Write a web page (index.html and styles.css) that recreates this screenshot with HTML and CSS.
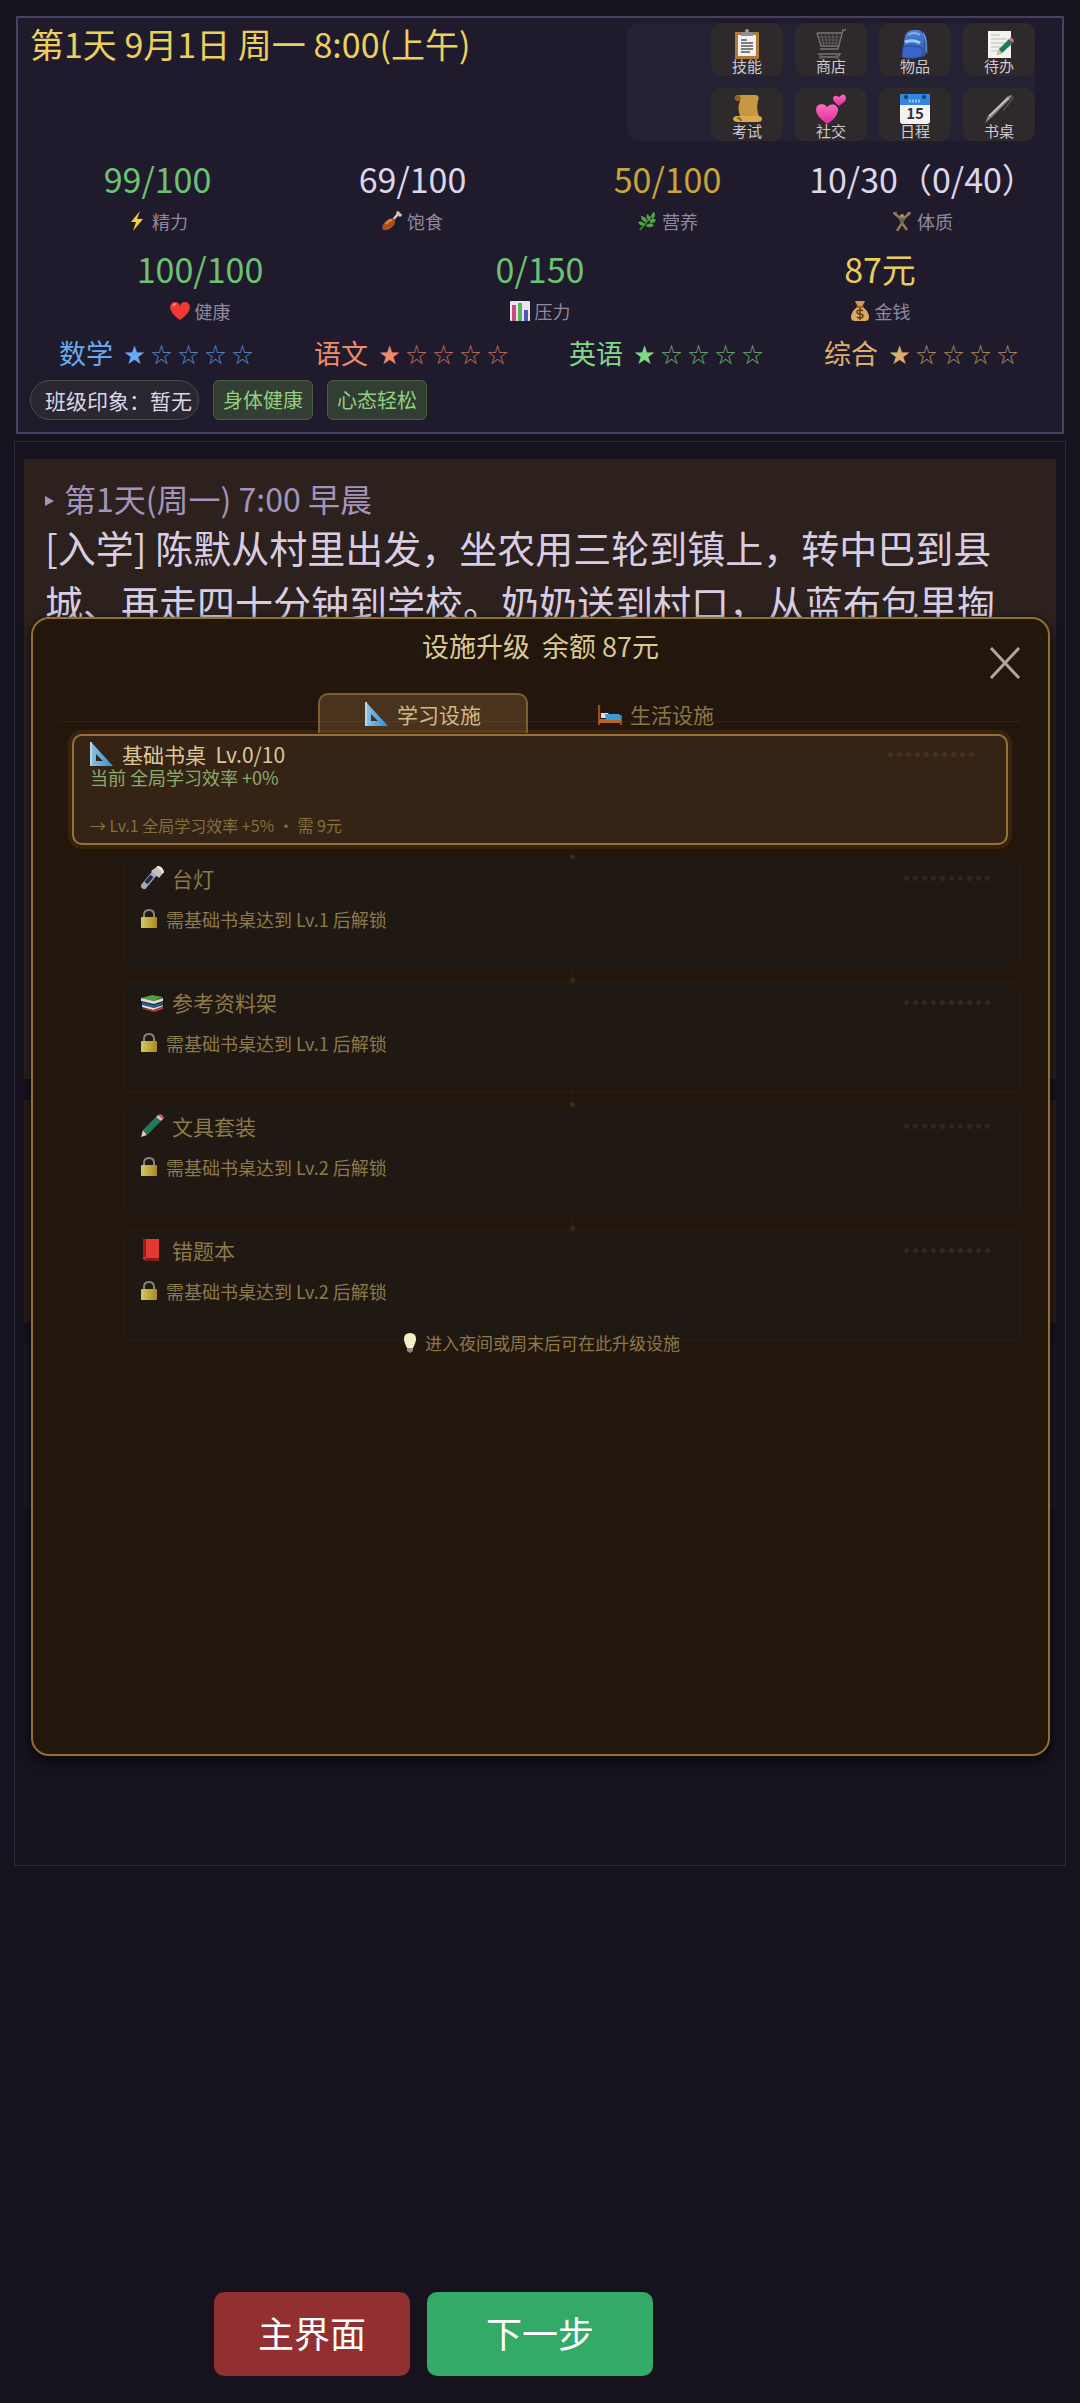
FILE: index.html
```html
<!DOCTYPE html>
<html lang="zh-CN">

<head>
    <meta charset="UTF-8">
    <meta name="viewport" content="width=device-width, initial-scale=1.0">
    <title>设施升级</title>
    <link rel="stylesheet" href="styles.css">
</head>

<body>
    <!-- icon sprites -->
    <svg class="sprites" aria-hidden="true">
        <defs>
            <linearGradient id="gBag" x1="0" y1="0" x2="0" y2="1">
                <stop offset="0" stop-color="#4f7fd0" />
                <stop offset="1" stop-color="#2f55b4" />
            </linearGradient>
            <linearGradient id="gPink" x1="0" y1="0" x2="0" y2="1">
                <stop offset="0" stop-color="#ff6cc0" />
                <stop offset="1" stop-color="#e02a9a" />
            </linearGradient>
            <linearGradient id="gRuler" x1="0" y1="0" x2="1" y2="0">
                <stop offset="0" stop-color="#8fc0e0" />
                <stop offset="1" stop-color="#2a8fd8" />
            </linearGradient>
            <linearGradient id="gLock" x1="0" y1="0" x2="1" y2="0">
                <stop offset="0" stop-color="#d8c95a" />
                <stop offset="1" stop-color="#a88a20" />
            </linearGradient>
        </defs>
        <symbol id="i-clipboard" viewBox="0 0 30 30">
            <rect x="3" y="3" width="24" height="27" rx="1" fill="#b07a3c" />
            <rect x="6" y="6" width="18" height="21" fill="#f4f2ee" />
            <path d="M9 3h12v4H9z" fill="#8d8d92" />
            <circle cx="15" cy="2" r="2" fill="#9a9a9f" />
            <path d="M9 11h6M9 14h12M9 17h12M9 20h12M9 23h9" stroke="#55555c" stroke-width="1.4" />
        </symbol>
        <symbol id="i-cart" viewBox="0 0 30 30">
            <path d="M30 1h-3l-5 19H4M1 4h25M1 4l4 13h18M4 28h18l2-3H2" fill="none" stroke="#77757a" stroke-width="1.3" />
            <path d="M5 4l3 13M9 4l2 13M13 4l1 13M17 4v13M21 4l-1 13M2 8h23M3 11h21M4 14h20" fill="none" stroke="#5d5b60" stroke-width="1" />
            <circle cx="5" cy="28" r="2" fill="#5d5b60" />
            <circle cx="21" cy="28" r="2" fill="#5d5b60" />
        </symbol>
        <symbol id="i-bag" viewBox="0 0 30 30">
            <path d="M18 1q8 1 9 10l1 13-5 4z" fill="#2c4e94" />
            <path d="M23 4q4 5 3 19" fill="none" stroke="#6d98dd" stroke-width="1.3" />
            <path d="M4 12Q5 1 13 1h5q6 1 6 11v15q-10 4-21 1z" fill="url(#gBag)" />
            <path d="M8 6q6-4 12 0" fill="none" stroke="#86aef0" stroke-width="2" />
            <path d="M5 13q9-3 15 1" fill="none" stroke="#8fd0ee" stroke-width="3" />
            <path d="M3 18q9-3 19 1v8q-10 4-20 1z" fill="#3a66cc" stroke="#274a9c" />
        </symbol>
        <symbol id="i-memo" viewBox="0 0 30 30">
            <rect x="4" y="2" width="23" height="27" fill="#f2f2ee" />
            <path d="M7 6h9M7 10h16M7 14h14M7 18h10M7 22h7" stroke="#bdbdc0" />
            <path d="M13 26l2-6 10-10 4 4-11 10z" fill="#1f7a58" />
            <path d="M13 26l2-6 3 4z" fill="#e2b98a" />
            <path d="M25 10l2-2 3 3-1 3z" fill="#d9687a" />
        </symbol>
        <symbol id="i-scroll" viewBox="0 0 30 30">
            <path d="M4 1h20q4 1 2 6-2 8 1 15H8Q5 14 8 7z" fill="#c99644" />
            <path d="M4 1q-3 3 0 6h4q2-3-1-6z" fill="#8f6222" />
            <path d="M4 22h22q4 0 4 3t-4 3H5q-4-1-4-3t3-3z" fill="#dca850" />
            <path d="M5 24q4 0 4 3" fill="none" stroke="#8f6222" stroke-width="2" />
        </symbol>
        <symbol id="i-hearts" viewBox="0 0 30 30">
            <path d="M11 30Q0 22 0 16q0-6 6-6 3 0 5 3 4-4 8-2 5 3 2 9-3 6-10 10z" fill="url(#gPink)" />
            <path d="M23 12q-6-4-6-8 1-4 6-1 5-5 7 0 1 4-7 9z" fill="url(#gPink)" />
        </symbol>
        <symbol id="i-pen" viewBox="0 0 30 30">
            <path d="M1 29l3-7L24 2l4-1-2 4L7 24z" fill="#8c8a8c" />
            <path d="M5 22L24 4" stroke="#d5d3d5" stroke-width="1.2" />
            <path d="M28 2q2 2-2 6l-7 9" fill="none" stroke="#6c6a6c" />
        </symbol>
        <symbol id="i-bolt" viewBox="0 0 20 20">
            <path d="M13 0L4 11h5L6 20l10-12h-6z" fill="#f8cf30" />
        </symbol>
        <symbol id="i-leg" viewBox="0 0 20 20">
            <path d="M10 10l6-7" stroke="#d8cdc0" stroke-width="2.4" />
            <circle cx="16" cy="2" r="1.8" fill="#d8cdc0" />
            <circle cx="18" cy="4" r="1.8" fill="#d8cdc0" />
            <path d="M13 8q1 5-4 9-4 3-8 2-2-4 2-8 4-5 10-3z" fill="#b04e1e" />
            <path d="M4 13q3-4 6-4" fill="none" stroke="#e08a4a" stroke-width="2" />
        </symbol>
        <symbol id="i-leaf" viewBox="0 0 20 20">
            <path d="M3 19Q9 12 17 2" fill="none" stroke="#3f8a34" stroke-width="1.6" />
            <path d="M17 1q3 4-2 7-2-4 2-7zM10 3q4 2 3 7-5-2-3-7zM4 5q6 1 6 6-6 0-6-6zM1 11q5-2 7 3-5 2-7-3zM13 9q4-3 6 0-2 4-6 3zM9 14q4-3 8 0-3 4-8 1z" fill="#4ea342" />
        </symbol>
        <symbol id="i-body" viewBox="0 0 20 20">
            <path d="M2 2l6 5 2 5-5 8M18 2l-6 5-2 5 5 7" fill="none" stroke="#9a7c4c" stroke-width="2.4" />
            <path d="M8 7h4v6H8z" fill="#5a6a5a" />
            <circle cx="10" cy="5" r="2" fill="#b9904f" />
            <path d="M1 2h4M15 2h4" stroke="#77808a" stroke-width="1.6" />
        </symbol>
        <symbol id="i-heart" viewBox="0 0 20 20">
            <path d="M10 19Q0 12 0 6q1-5 5-5 4 0 5 4 1-4 5-4 4 0 5 5 0 6-10 13z" fill="#ee3a33" />
            <path d="M3 5q1-2 3-2" stroke="#ff8a80" stroke-width="1.6" fill="none" />
        </symbol>
        <symbol id="i-chart" viewBox="0 0 20 20">
            <rect width="20" height="20" rx="1" fill="#e6e6ec" />
            <path d="M2 4h4v16H2z" fill="#c84a80" />
            <path d="M8 2h4v18H8z" fill="#58b060" />
            <path d="M14 9h4v11h-4z" fill="#4a58b8" />
        </symbol>
        <symbol id="i-ruler" viewBox="0 0 24 24">
            <path d="M1 0l22 24H1zM6 12v7h7z" fill="url(#gRuler)" fill-rule="evenodd" />
            <path d="M1 0v24" stroke="#b8d4e4" stroke-width="2" />
        </symbol>
        <symbol id="i-bed" viewBox="0 0 24 24">
            <path d="M1 3v20M23 13v10" stroke="#9a4e1c" stroke-width="2.4" />
            <path d="M1 17h22v4H1z" fill="#b8622a" />
            <path d="M3 11h7l3 5H3z" fill="#d8e4ea" />
            <path d="M7 12h14q2 1 2 6H8z" fill="#3a9ad8" />
        </symbol>
        <symbol id="i-torch" viewBox="0 0 24 24">
            <path d="M4 20L14 8" stroke="#a4a7b4" stroke-width="6" stroke-linecap="round" />
            <path d="M6 17l6-7" stroke="#20284e" stroke-width="4" />
            <path d="M11 5l7-5 6 6-5 6z" fill="#c4c2c0" />
            <path d="M17 1q5 0 6 6" stroke="#f2ead0" stroke-width="2.4" fill="none" />
        </symbol>
        <symbol id="i-books" viewBox="0 0 24 24">
            <path d="M1 8l11-3 11 2-9 4z" fill="#4fa03c" />
            <path d="M1 8l13 3 9-3v3l-9 3L1 11z" fill="#d8dcd4" />
            <path d="M2 12l12 3 9-3v2l-9 4-12-3z" fill="#2f5f9a" />
            <path d="M2 15l12 3 9-3-1 2-9 3-11-3z" fill="#dfe2e4" />
            <path d="M3 18l11 2 9-4v3l-9 3-11-3z" fill="#b83a34" />
        </symbol>
        <symbol id="i-pencil" viewBox="0 0 24 24">
            <path d="M1 23l2-7 4 5z" fill="#e6cfa8" />
            <path d="M3 16L16 3l5 4L7 21z" fill="#1f7c5c" />
            <path d="M16 3l2-2 5 4-2 2z" fill="#c8c8c8" />
            <path d="M18 1q3-2 5 1t0 3z" fill="#d85a5a" />
        </symbol>
        <symbol id="i-book" viewBox="0 0 24 24">
            <path d="M3 1h16v21H5q-2 0-2-3z" fill="#e23a30" />
            <path d="M3 1h3v18H3z" fill="#9a1d1a" />
            <path d="M5 20h14v3H5z" fill="#8e1a18" />
        </symbol>
        <symbol id="i-lock" viewBox="0 0 18 20">
            <path d="M4 9V6q0-5 5-5t5 5v3" fill="none" stroke="#87827c" stroke-width="2" />
            <rect x="1" y="8" width="16" height="11" rx="1" fill="url(#gLock)" />
        </symbol>
        <symbol id="i-bulb" viewBox="0 0 18 20">
            <path d="M9 0q6 0 6 6 0 3-3 9H6Q3 9 3 6q0-6 6-6z" fill="#f6efc4" />
            <path d="M6 15h6v3l-3 2-3-2z" fill="#8b8a84" />
        </symbol>
    </svg>

    <header class="status">
        <div class="status-top">
            <h1>第1天 9月1日 周一 8:00(上午)</h1>
            <nav class="menu">
                <button type="button"><svg><use href="#i-clipboard" /></svg>技能</button>
                <button type="button"><svg><use href="#i-cart" /></svg>商店</button>
                <button type="button"><svg><use href="#i-bag" /></svg>物品</button>
                <button type="button"><svg><use href="#i-memo" /></svg>待办</button>
                <button type="button"><svg><use href="#i-scroll" /></svg>考试</button>
                <button type="button"><svg><use href="#i-hearts" /></svg>社交</button>
                <button type="button">
                    <svg viewBox="0 0 30 30">
                        <rect width="30" height="30" rx="3" fill="#f3f3f3" />
                        <path d="M0 11V3q0-3 3-3h24q3 0 3 3v8z" fill="#2f86e0" />
                        <circle cx="6" cy="3" r="2" fill="#123d70" />
                        <circle cx="24" cy="3" r="2" fill="#123d70" />
                        <path d="M9 7h12" stroke="#8fc2f4" stroke-width="3" stroke-dasharray="2 1" />
                        <text x="15" y="25" font-size="15" font-weight="bold" fill="#333" text-anchor="middle">15</text>
                    </svg>日程</button>
                <button type="button"><svg><use href="#i-pen" /></svg>书桌</button>
            </nav>
        </div>

        <div class="stats">
            <div class="stat good"><b>99/100</b><span><svg><use href="#i-bolt" /></svg>精力</span></div>
            <div class="stat"><b>69/100</b><span><svg><use href="#i-leg" /></svg>饱食</span></div>
            <div class="stat warn"><b>50/100</b><span><svg><use href="#i-leaf" /></svg>营养</span></div>
            <div class="stat"><b>10/30（0/40）</b><span><svg><use href="#i-body" /></svg>体质</span></div>
        </div>
        <div class="stats">
            <div class="stat good"><b>100/100</b><span><svg><use href="#i-heart" /></svg>健康</span></div>
            <div class="stat good"><b>0/150</b><span><svg><use href="#i-chart" /></svg>压力</span></div>
            <div class="stat money"><b>87元</b><span>
                <svg viewBox="0 0 20 20">
                    <path d="M5 0h10l-3 6H8z" fill="#d09a50" />
                    <path d="M7 6h6q6 5 6 10 0 4-4 4H5q-4 0-4-4 0-5 6-10z" fill="#d9a863" />
                    <path d="M6 6h8" stroke="#8a5a20" stroke-width="1.6" />
                    <path d="M13 10q-1-1-3-1-3 0-3 2t3 2 3 2-3 2q-2 0-3-1M10 7v12" fill="none" stroke="#5a3a14" stroke-width="1.4" />
                </svg>金钱</span></div>
        </div>

        <div class="subjects">
            <div class="subject math">数学<span class="stars"><i class="on">★</i><i>☆</i><i>☆</i><i>☆</i><i>☆</i></span></div>
            <div class="subject chinese">语文<span class="stars"><i class="on">★</i><i>☆</i><i>☆</i><i>☆</i><i>☆</i></span></div>
            <div class="subject english">英语<span class="stars"><i class="on">★</i><i>☆</i><i>☆</i><i>☆</i><i>☆</i></span></div>
            <div class="subject general">综合<span class="stars"><i class="on">★</i><i>☆</i><i>☆</i><i>☆</i><i>☆</i></span></div>
        </div>

        <div class="tags">
            <span class="impression">班级印象：暂无</span>
            <span class="tag">身体健康</span>
            <span class="tag">心态轻松</span>
        </div>
    </header>

    <main class="feed">
        <article class="entry story">
            <h2><svg viewBox="0 0 10 12"><path d="M0 1l9 5-9 5z" fill="currentColor" /></svg>第1天(周一) 7:00 早晨</h2>
            <p>[入学] 陈默从村里出发，坐农用三轮到镇上，转中巴到县<br>城、再走四十分钟到学校。奶奶送到村口，从蓝布包里掏</p>
        </article>
        <article class="entry event"></article>
        <article class="entry next"></article>

        <section class="modal" role="dialog" aria-labelledby="modalTitle">
            <h2 id="modalTitle">设施升级&nbsp; 余额 87元</h2>
            <button type="button" class="close" aria-label="关闭">
                <svg viewBox="0 0 32 32"><path d="M2 1l28 30M30 1L2 31" /></svg>
            </button>

            <div class="tabs">
                <button type="button" class="tab active"><svg><use href="#i-ruler" /></svg>学习设施</button>
                <button type="button" class="tab"><svg><use href="#i-bed" /></svg>生活设施</button>
            </div>

            <div class="facilities">
                <div class="facility current">
                    <h3><svg><use href="#i-ruler" /></svg>基础书桌&nbsp; Lv.0/10<span class="dots"></span></h3>
                    <p class="effect">当前 全局学习效率 +0%</p>
                    <p class="upgrade">→ Lv.1 全局学习效率 +5% · 需 9元</p>
                </div>
                <div class="facility locked">
                    <h3><svg><use href="#i-torch" /></svg>台灯<span class="dots"></span></h3>
                    <p class="need"><svg><use href="#i-lock" /></svg>需基础书桌达到 Lv.1 后解锁</p>
                </div>
                <div class="facility locked">
                    <h3><svg><use href="#i-books" /></svg>参考资料架<span class="dots"></span></h3>
                    <p class="need"><svg><use href="#i-lock" /></svg>需基础书桌达到 Lv.1 后解锁</p>
                </div>
                <div class="facility locked">
                    <h3><svg><use href="#i-pencil" /></svg>文具套装<span class="dots"></span></h3>
                    <p class="need"><svg><use href="#i-lock" /></svg>需基础书桌达到 Lv.2 后解锁</p>
                </div>
                <div class="facility locked">
                    <h3><svg><use href="#i-book" /></svg>错题本<span class="dots"></span></h3>
                    <p class="need"><svg><use href="#i-lock" /></svg>需基础书桌达到 Lv.2 后解锁</p>
                </div>
            </div>
            <p class="hint"><svg><use href="#i-bulb" /></svg>进入夜间或周末后可在此升级设施</p>
        </section>
    </main>

    <footer class="actions">
        <button type="button" class="home">主界面</button>
        <button type="button" class="forward">下一步</button>
    </footer>
</body>

</html>
```

FILE: styles.css
```css
* {
    box-sizing: border-box;
}

body {
    margin: 0;
    min-height: 100vh;
    padding: 16px 0 27px;
    display: flex;
    flex-direction: column;
    background-color: #16131f;
    color: #dcd6ea;
    font-family: "Noto Sans CJK SC", "Noto Sans", sans-serif;
}

h1,
h2,
h3,
p {
    margin: 0;
    font-weight: normal;
}

button {
    padding: 0;
    border: none;
    background: none;
    color: inherit;
    font-family: inherit;
    cursor: pointer;
}

.sprites {
    position: absolute;
    width: 0;
    height: 0;
}

/* status panel */
.status {
    margin: 0 16px;
    padding: 5px 12px 12px;
    border: 2px solid #464063;
    background-color: #1f1b2d;
}

.status-top {
    display: flex;
    justify-content: space-between;
}

h1 {
    font-size: 34px;
    line-height: 42px;
    color: #ecd05c;
}

.menu {
    display: grid;
    grid-template-columns: repeat(4, 72px);
    gap: 12px;
    margin-right: 15px;
    padding-left: 84px;
    border-radius: 12px;
    background-color: #242134;
}

.menu button {
    display: flex;
    flex-direction: column;
    align-items: center;
    height: 53px;
    padding-top: 6px;
    border-radius: 10px;
    background-color: #2e2a2b;
    color: #cfc8d6;
    font-size: 15px;
    line-height: 14px;
}

.menu svg {
    width: 30px;
    height: 30px;
}

.stats {
    display: flex;
    margin-top: 14px;
}

.status-top + .stats {
    margin-top: 16px;
}

.stat {
    flex: 1;
    text-align: center;
}

.stat b {
    display: block;
    font-size: 34px;
    font-weight: normal;
    line-height: 44px;
    white-space: nowrap;
}

.stat span {
    display: flex;
    justify-content: center;
    align-items: center;
    gap: 5px;
    margin-top: 8px;
    color: #8f899f;
    font-size: 18px;
    line-height: 24px;
}

.stat svg {
    width: 20px;
    height: 20px;
}

.good {
    color: #6cc272;
}

.warn {
    color: #c9a33c;
}

.money {
    color: #e6cd5e;
}

.subjects {
    display: flex;
    margin-top: 12px;
}

.subject {
    flex: 1;
    display: flex;
    justify-content: center;
    gap: 8px;
    font-size: 27px;
    line-height: 36px;
}

.stars {
    display: flex;
}

.stars i {
    width: 27px;
    font-size: 21px;
    font-style: normal;
    text-align: center;
    opacity: 0.75;
}

.stars .on {
    opacity: 1;
}

.math {
    color: #6aaaf0;
}

.chinese {
    color: #f08a68;
}

.english {
    color: #84d68a;
}

.general {
    color: #dcae6c;
}

.tags {
    display: flex;
    gap: 14px;
    margin-top: 9px;
}

.impression,
.tag {
    border: 1px solid #4b4950;
    line-height: 38px;
}

.impression {
    padding: 0 6px 0 14px;
    border-radius: 20px;
    background-color: #2a2730;
    font-size: 21px;
}

.tag {
    padding: 0 9px;
    border-color: #48603e;
    border-radius: 6px;
    background-color: #323e34;
    color: #92cf7e;
    font-size: 20px;
}

/* story feed */
.feed {
    position: relative;
    flex: 1;
    display: flex;
    flex-direction: column;
    gap: 21px;
    margin: 7px 14px 426px;
    padding: 17px 9px;
    border: 1px solid #2c2840;
}

.entry {
    min-height: 165px;
    padding: 18px 21px;
    background-color: #1a1928;
}

.story {
    min-height: 620px;
    background-color: #2c211d;
}

.event {
    min-height: 223px;
    background-color: #2c1d18;
}

.entry h2 {
    display: flex;
    align-items: center;
    gap: 9px;
    color: #a493bb;
    font-size: 32px;
    line-height: 42px;
}

.entry h2 svg {
    width: 10px;
    height: 12px;
    margin-top: 5px;
}

.entry p {
    color: #d8cde2;
    font-size: 38px;
    line-height: 55px;
}

/* upgrade dialog */
.modal {
    position: absolute;
    top: 175px;
    right: 15px;
    bottom: 109px;
    left: 16px;
    padding-top: 12px;
    border: 2px solid #8f6f35;
    border-radius: 18px;
    background-color: #23170d;
    box-shadow: 0 4px 10px 2px rgba(0, 0, 0, 0.6);
}

.modal > h2 {
    color: #dcc897;
    font-size: 27px;
    line-height: 30px;
    text-align: center;
}

.close {
    position: absolute;
    top: 19px;
    right: 18px;
    width: 50px;
    height: 50px;
}

.close svg {
    display: block;
    width: 32px;
    height: 32px;
    margin: auto;
    fill: none;
    stroke: #b5a49e;
    stroke-width: 3;
}

.tabs {
    position: relative;
    z-index: 1;
    display: flex;
    justify-content: center;
    gap: 23px;
    height: 29px;
    margin: 32px 28px 12px 26px;
    border-bottom: 1px solid #33230f;
}

.tab {
    display: flex;
    justify-content: center;
    align-items: center;
    gap: 8px;
    width: 210px;
    height: 40px;
    border: 2px solid transparent;
    border-bottom: none;
    border-radius: 10px 10px 0 0;
    color: #8a7648;
    font-size: 21px;
}

.tab.active {
    border-color: #7d6030;
    background-color: rgba(214, 156, 82, 0.22);
    color: #cdb985;
}

.tab svg,
.facility h3 svg {
    width: 24px;
    height: 24px;
}

.facilities {
    position: relative;
    display: flex;
    flex-direction: column;
    gap: 13px;
    padding: 0 26px 0 39px;
}

.facility {
    position: relative;
    display: flex;
    flex-direction: column;
    min-height: 111px;
    padding: 6px 16px 8px;
    border: 2px solid #241b14;
    border-radius: 10px;
}

.facility h3 {
    display: flex;
    align-items: center;
    gap: 8px;
    font-size: 21px;
    line-height: 22px;
}

.current {
    margin-right: 14px;
    border-color: #94733a;
    background-color: #352415;
    box-shadow: 0 0 0 4px #38220e;
    color: #dcc897;
}

.effect {
    color: #8bab6c;
    font-size: 18px;
    line-height: 22px;
}

.upgrade {
    margin-top: auto;
    color: #83703e;
    font-size: 16px;
    line-height: 20px;
}

.locked {
    margin-left: 50px;
    background-color: #201812;
    color: #8d7a4a;
}

/* link to the facility above */
.locked::before,
.locked::after {
    content: "";
    position: absolute;
    left: 50%;
}

.locked + .locked::before {
    top: -20px;
    height: 16px;
    border-left: 1px solid #2b1e11;
}

.locked::after {
    top: -6px;
    width: 5px;
    height: 5px;
    margin-left: -2px;
    border-radius: 50%;
    background-color: #3b2a17;
}

.need,
.hint {
    display: flex;
    align-items: center;
    gap: 8px;
}

.need {
    margin-top: 17px;
    font-size: 18px;
    line-height: 24px;
}

.need svg,
.hint svg {
    width: 18px;
    height: 20px;
}

.dots {
    width: 90px;
    height: 5px;
    margin-left: auto;
    margin-right: 12px;
    background: radial-gradient(circle, #32271a 2px, transparent 3px) 0 0 / 9px 5px;
}

.current .dots {
    margin-right: 14px;
    background-image: radial-gradient(circle, #44321d 2px, transparent 3px);
}

.hint {
    position: relative;
    justify-content: center;
    gap: 6px;
    margin-top: -8px;
    color: #8d7a4a;
    font-size: 17px;
    line-height: 20px;
}

/* bottom buttons */
.actions {
    display: flex;
    justify-content: center;
    gap: 17px;
    padding-right: 213px;
}

.actions button {
    height: 84px;
    border-radius: 10px;
    color: #fff;
    font-size: 36px;
}

.actions .home {
    padding: 0 44px 4px;
    background-color: #922f31;
}

.actions .forward {
    padding: 0 59px 4px;
    background-color: #33aa68;
}
```
